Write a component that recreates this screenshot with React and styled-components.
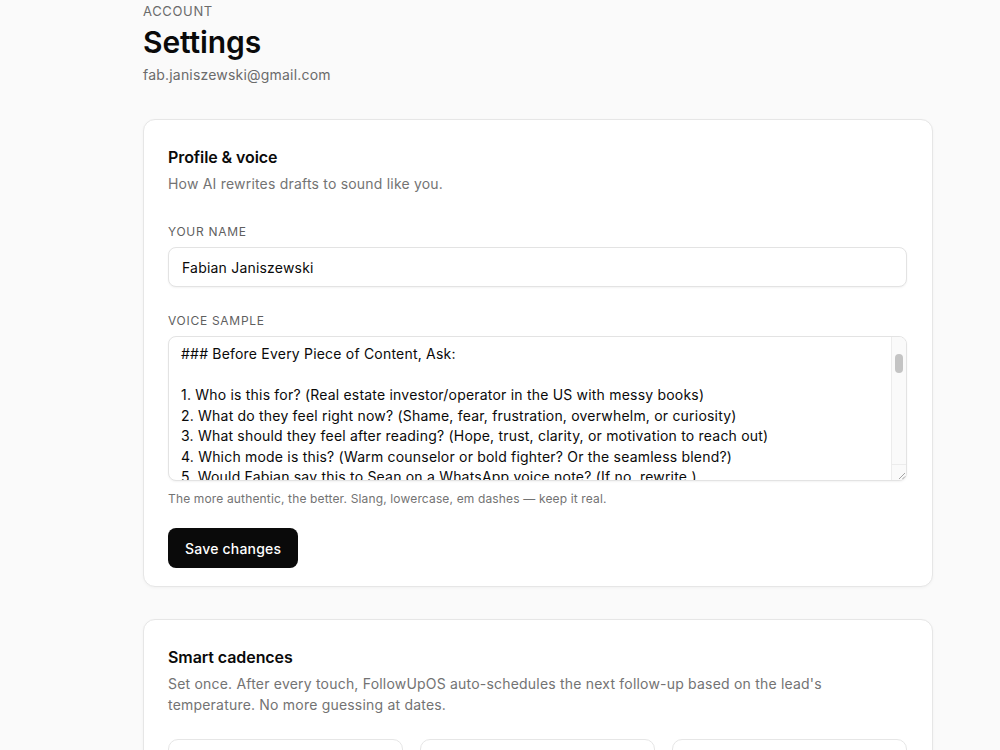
import React from "react";
import styled, { createGlobalStyle } from "styled-components";

const GlobalStyle = createGlobalStyle`
  * { box-sizing: border-box; }
  html, body { margin: 0; padding: 0; background: #fafafa; }
  body {
    font-family: Inter, "Noto Sans", "Liberation Sans", sans-serif;
    color: #0a0a0a;
    -webkit-font-smoothing: antialiased;
  }
`;

const Page = styled.main`
  width: 790px;
  margin-left: 143px;
  padding: 3px 0 40px;
`;

const Header = styled.header`
  display: flex;
  flex-direction: column;
`;

const Eyebrow = styled.div`
  font-size: 13px;
  line-height: 16px;
  letter-spacing: 0.05em;
  text-transform: uppercase;
  color: #6b6b6b;
`;

const Title = styled.h1`
  margin: 5px 0 0;
  font-size: 30px;
  line-height: 36px;
  font-weight: 600;
  letter-spacing: -0.004em;
  color: #0a0a0a;
`;

const Email = styled.div`
  margin-top: 5px;
  font-size: 14px;
  line-height: 20px;
  letter-spacing: 0.2px;
  color: #6b6b6b;
`;

const Stack = styled.div`
  display: flex;
  flex-direction: column;
  gap: 32px;
  margin-top: 34px;
`;

const Card = styled.section`
  background: #fff;
  border: 1px solid #e6e6e6;
  border-radius: 12px;
  box-shadow: 0 1px 3px rgba(0, 0, 0, 0.04);
  padding: 25px 25px ${(p) => p.$padBottom || 24}px 24px;
`;

const CardTitle = styled.h2`
  margin: 0;
  font-size: 16px;
  line-height: 24px;
  font-weight: 600;
  letter-spacing: -0.005em;
`;

const CardSubtitle = styled.p`
  margin: 4px 0 0;
  max-width: ${(p) => p.$max || "none"};
  font-size: 14px;
  line-height: 21px;
  letter-spacing: 0.2px;
  color: #737373;
`;

const Field = styled.div`
  display: flex;
  flex-direction: column;
  gap: 7px;
  margin-top: ${(p) => p.$top}px;
`;

const Label = styled.label`
  font-size: 12px;
  line-height: 16px;
  letter-spacing: 0.06em;
  text-transform: uppercase;
  color: #5f5f5f;
`;

const TextInput = styled.input`
  height: 40px;
  padding: 0 13px;
  border: 1px solid #e3e3e3;
  border-radius: 8px;
  background: #fff;
  box-shadow: 0 1px 2px rgba(0, 0, 0, 0.05);
  font: inherit;
  font-size: 14px;
  letter-spacing: 0.2px;
  color: #0a0a0a;
  outline: none;
`;

const AreaWrap = styled.div`
  position: relative;
  display: flex;
  flex-direction: column;
`;

const TextArea = styled.textarea`
  height: 145px;
  padding: 7px 24px 8px 12px;
  border: 1px solid #e3e3e3;
  border-radius: 8px;
  background: #fff;
  box-shadow: 0 1px 2px rgba(0, 0, 0, 0.05);
  font: inherit;
  font-size: 14px;
  line-height: 20.5px;
  letter-spacing: 0.2px;
  color: #0a0a0a;
  outline: none;
  resize: none;
  overflow: hidden;
`;

/* scrollbar track drawn over the textarea's right edge */
const ScrollTrack = styled.div`
  position: absolute;
  top: 1px;
  right: 1px;
  bottom: 1px;
  width: 15px;
  display: flex;
  flex-direction: column;
  background: #fafafa;
  border-left: 1px solid #ececec;
  border-radius: 0 7px 7px 0;
  pointer-events: none;
`;

const ScrollThumb = styled.div`
  margin: 17px 0 0 3px;
  width: 8px;
  height: 19px;
  border-radius: 4px;
  background: #c4c4c4;
`;

const ResizeCorner = styled.div`
  margin-top: auto;
  height: 16px;
  border-top: 1px solid #ececec;
  display: flex;
  align-items: flex-end;
  justify-content: flex-end;
`;

const Hint = styled.p`
  margin: 3px 0 0;
  font-size: 12px;
  line-height: 16px;
  letter-spacing: 0.15px;
  color: #737373;
`;

const PrimaryButton = styled.button`
  align-self: flex-start;
  margin-top: 21px;
  height: 40px;
  padding: 0 17px;
  border: none;
  border-radius: 8px;
  background: #0a0a0a;
  color: #fff;
  font: inherit;
  font-size: 14px;
  font-weight: 500;
  letter-spacing: 0.2px;
  cursor: pointer;
`;

const CardBody = styled.div`
  display: flex;
  flex-direction: column;
`;

const CadenceGrid = styled.div`
  display: grid;
  grid-template-columns: repeat(3, 1fr);
  gap: 17px;
  margin-top: 24px;
`;

const CadenceTile = styled.div`
  min-height: 150px;
  padding: 16px;
  border: 1px solid #e6e6e6;
  border-radius: 10px;
  background: #fff;
  display: flex;
  flex-direction: column;
  gap: 6px;
`;

const TileName = styled.div`
  font-size: 14px;
  font-weight: 600;
`;

const TileMeta = styled.div`
  font-size: 13px;
  color: #737373;
`;

const voiceSample = `### Before Every Piece of Content, Ask:

1. Who is this for? (Real estate investor/operator in the US with messy books)
2. What do they feel right now? (Shame, fear, frustration, overwhelm, or curiosity)
3. What should they feel after reading? (Hope, trust, clarity, or motivation to reach out)
4. Which mode is this? (Warm counselor or bold fighter? Or the seamless blend?)
5. Would Fabian say this to Sean on a WhatsApp voice note? (If no, rewrite.)

### Tone

- Talk like a friend who happens to be great with numbers.
- Short sentences. Plain words. No corporate filler.
- Lowercase is fine. Em dashes are fine — use them.
- Be direct about the problem, gentle with the person.
- Never shame anyone for being behind on their books.

### Words I use

- "let's get you sorted"
- "no judgment, seriously"
- "messy books are normal"
- "here's the plan"

### Sign-off

Talk soon,
Fabian`;

const cadences = [
  { name: "Hot", meta: "Follow up in 2 days" },
  { name: "Warm", meta: "Follow up in 7 days" },
  { name: "Cold", meta: "Follow up in 30 days" },
];

export default function App() {
  return (
    <>
      <GlobalStyle />
      <Page>
        <Header>
          <Eyebrow>Account</Eyebrow>
          <Title>Settings</Title>
          <Email>fab.janiszewski@gmail.com</Email>
        </Header>

        <Stack>
          <Card $padBottom={18}>
            <CardBody>
              <CardTitle>Profile &amp; voice</CardTitle>
              <CardSubtitle>How AI rewrites drafts to sound like you.</CardSubtitle>

              <Field $top={30}>
                <Label htmlFor="name">Your name</Label>
                <TextInput id="name" defaultValue="Fabian Janiszewski" />
              </Field>

              <Field $top={26}>
                <Label htmlFor="voice">Voice sample</Label>
                <AreaWrap>
                  <TextArea id="voice" defaultValue={voiceSample} spellCheck={false} />
                  <ScrollTrack>
                    <ScrollThumb />
                    <ResizeCorner>
                      <svg width="10" height="10" viewBox="0 0 10 10">
                        <path d="M9 3L3 9M9 6.5L6.5 9" stroke="#9a9a9a" strokeWidth="0.9" fill="none" />
                      </svg>
                    </ResizeCorner>
                  </ScrollTrack>
                </AreaWrap>
                <Hint>The more authentic, the better. Slang, lowercase, em dashes — keep it real.</Hint>
              </Field>

              <PrimaryButton type="button">Save changes</PrimaryButton>
            </CardBody>
          </Card>

          <Card>
            <CardTitle>Smart cadences</CardTitle>
            <CardSubtitle $max="660px">
              Set once. After every touch, FollowUpOS auto-schedules the next follow-up based on the
              lead's temperature. No more guessing at dates.
            </CardSubtitle>
            <CadenceGrid>
              {cadences.map((c) => (
                <CadenceTile key={c.name}>
                  <TileName>{c.name}</TileName>
                  <TileMeta>{c.meta}</TileMeta>
                </CadenceTile>
              ))}
            </CadenceGrid>
          </Card>
        </Stack>
      </Page>
    </>
  );
}
